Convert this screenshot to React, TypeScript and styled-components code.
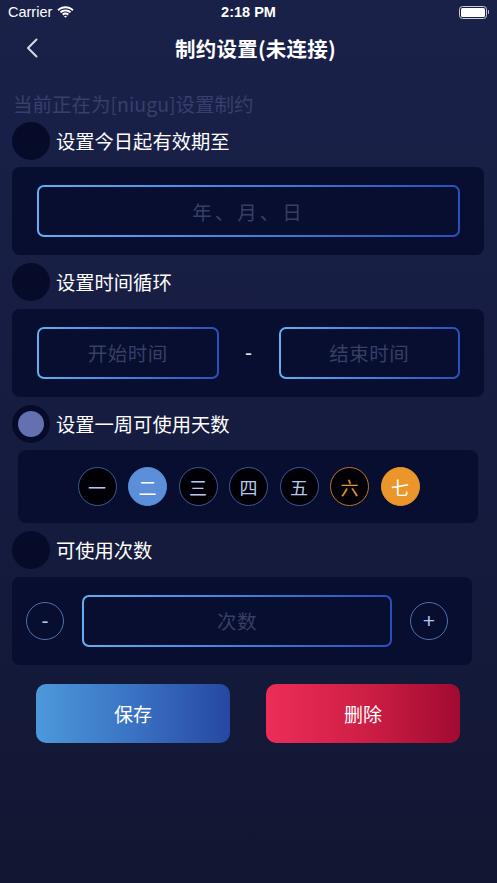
import * as React from 'react';
import styled, { createGlobalStyle, css } from 'styled-components';

const GlobalStyle = createGlobalStyle`
    html, body {
        margin: 0;
        padding: 0;
    }
    body {
        background: #141a3a;
        font-family: 'Noto Sans CJK SC', 'Noto Sans', sans-serif;
    }
`;

const Page = styled.div`
    width: 497px;
    height: 883px;
    overflow: hidden;
    background: linear-gradient(180deg, #1a2149 0%, #161c40 50%, #111732 100%);
    color: #fff;
`;

const StatusBar = styled.div`
    height: 24px;
    display: grid;
    grid-template-columns: 1fr auto 1fr;
    align-items: center;
    padding: 0 8px;
    font-family: 'Liberation Sans', 'Noto Sans', sans-serif;
    font-size: 14.5px;
    color: #fff;
`;

const Carrier = styled.div`
    display: flex;
    align-items: center;
    gap: 5px;
`;

const Clock = styled.div`
    font-weight: 700;
`;

const Battery = styled.div`
    justify-self: end;
    display: flex;
    align-items: center;
`;

const BatteryBody = styled.div`
    width: 24px;
    height: 9px;
    border: 1.5px solid #c9ccd8;
    border-radius: 3.5px;
    padding: 1px;
    & > div {
        width: 100%;
        height: 100%;
        background: #fff;
        border-radius: 1.5px;
    }
`;

const BatteryNub = styled.div`
    width: 1.5px;
    height: 4px;
    margin-left: 1px;
    background: #c9ccd8;
    border-radius: 0 1px 1px 0;
`;

const NavBar = styled.div`
    height: 48px;
    display: grid;
    grid-template-columns: 60px 1fr 60px;
    align-items: center;
`;

const BackButton = styled.div`
    padding-left: 26px;
    display: flex;
    align-items: center;
`;

const Title = styled.div`
    text-align: center;
    padding-left: 14px;
    font-size: 20.5px;
    font-weight: 600;
    letter-spacing: 0.2px;
`;

const Content = styled.div`
    padding: 0 13px 0 12px;
    display: flex;
    flex-direction: column;
`;

const Hint = styled.div`
    margin-top: 19px;
    padding-left: 1px;
    font-size: 19.5px;
    line-height: 25px;
    color: #373f6c;
`;

const OptionRow = styled.div<{ $first?: boolean }>`
    margin-top: ${p => (p.$first ? 5.5 : 8)}px;
    height: 38px;
    display: flex;
    align-items: center;
    gap: 6px;
    font-size: 19.3px;
`;

const Radio = styled.div<{ $checked?: boolean }>`
    width: 38px;
    height: 38px;
    border-radius: 50%;
    background: #060b29;
    display: flex;
    align-items: center;
    justify-content: center;
    & > span {
        width: 26px;
        height: 26px;
        border-radius: 50%;
        background: ${p => (p.$checked ? '#6470b0' : 'transparent')};
    }
`;

const Card = styled.div<{ $height?: number; $left?: number; $right?: number }>`
    margin-top: 7.5px;
    height: ${p => p.$height || 88}px;
    margin-left: ${p => p.$left || 0}px;
    margin-right: ${p => p.$right || 0}px;
    background: #070e2f;
    border-radius: 8px;
    display: flex;
    align-items: center;
`;

const gradientBorder = css`
    border: 2px solid transparent;
    background: linear-gradient(#070e2f, #070e2f) padding-box,
        linear-gradient(90deg, #66aef2 0%, #4280dc 50%, #2c4fbb 100%) border-box;
    border-radius: 7px;
`;

const Field = styled.div<{ $spread?: boolean }>`
    ${gradientBorder};
    flex: 1;
    height: 52px;
    box-sizing: border-box;
    display: flex;
    align-items: center;
    justify-content: center;
    font-size: 19.5px;
    color: #383f66;
    letter-spacing: ${p => (p.$spread ? '3px' : '0.5px')};
`;

const FieldRow = styled.div<{ $pad: string; $gap: number }>`
    flex: 1;
    display: flex;
    align-items: center;
    padding: ${p => p.$pad};
    gap: ${p => p.$gap}px;
`;

const Dash = styled.div`
    width: 16px;
    text-align: center;
    font-family: 'Liberation Sans', sans-serif;
    font-size: 21px;
    color: #e6e8f0;
`;

const DayList = styled.div`
    flex: 1;
    display: flex;
    justify-content: center;
    gap: 11.5px;
    padding-left: 1px;
`;

type DayKind = 'plain' | 'blue' | 'orangeLine' | 'orange';

const dayStyles: Record<DayKind, ReturnType<typeof css>> = {
    plain: css`
        background: #000006;
        border: 1px solid #3b5a93;
        color: #b8c8ea;
    `,
    blue: css`
        background: #5b8fd9;
        border: 1px solid #5b8fd9;
        color: #fff;
    `,
    orangeLine: css`
        background: #000006;
        border: 1px solid #b87530;
        color: #e7982f;
    `,
    orange: css`
        background: #ea962b;
        border: 1px solid #ea962b;
        color: #fff;
    `,
};

const Day = styled.div<{ $kind: DayKind }>`
    width: 39px;
    height: 39px;
    box-sizing: border-box;
    border-radius: 50%;
    display: flex;
    align-items: center;
    justify-content: center;
    font-size: 18px;
    ${p => dayStyles[p.$kind]};
`;

const StepButton = styled.div`
    width: 38px;
    height: 38px;
    box-sizing: border-box;
    border-radius: 50%;
    border: 1px solid #4a72b4;
    display: flex;
    align-items: center;
    justify-content: center;
    color: #b6c6ea;
    font-family: 'Liberation Sans', sans-serif;
    font-size: 21px;
    flex-shrink: 0;
`;

const Actions = styled.div`
    margin-top: 19px;
    padding: 0 24px;
    display: grid;
    grid-template-columns: 194px 194px;
    justify-content: space-between;
`;

const ActionButton = styled.div<{ $tone: 'save' | 'danger' }>`
    height: 59px;
    border-radius: 10px;
    display: flex;
    align-items: center;
    justify-content: center;
    font-size: 19px;
    color: #fff;
    background: ${p =>
        p.$tone === 'save'
            ? 'linear-gradient(90deg, #4c99da 0%, #3a72c4 50%, #2548a1 100%)'
            : 'linear-gradient(90deg, #ec2d57 0%, #cf1f45 50%, #a10a31 100%)'};
`;

const days: { label: string; kind: DayKind }[] = [
    { label: '一', kind: 'plain' },
    { label: '二', kind: 'blue' },
    { label: '三', kind: 'plain' },
    { label: '四', kind: 'plain' },
    { label: '五', kind: 'plain' },
    { label: '六', kind: 'orangeLine' },
    { label: '七', kind: 'orange' },
];

const Wifi = () => (
    <svg width="17" height="12" viewBox="0 0 17 12">
        <path d="M8.5 2.2c2.6 0 5 1 6.8 2.7l1.3-1.4C14.4 1.4 11.6.2 8.5.2S2.6 1.4.4 3.5l1.3 1.4C3.5 3.2 5.9 2.2 8.5 2.2z" fill="#fff" />
        <path d="M8.5 5.4c1.7 0 3.2.6 4.4 1.7l1.3-1.4C12.7 4.3 10.7 3.4 8.5 3.4S4.3 4.3 2.8 5.7l1.3 1.4c1.2-1.1 2.7-1.7 4.4-1.7z" fill="#fff" />
        <path d="M8.5 8.6c.8 0 1.5.3 2 .8l1.4-1.4c-.9-.9-2.1-1.4-3.4-1.4s-2.5.5-3.4 1.4l1.4 1.4c.5-.5 1.2-.8 2-.8z" fill="#fff" />
        <path d="M8.5 11.8l1.5-1.5c-.4-.4-.9-.6-1.5-.6s-1.1.2-1.5.6z" fill="#fff" />
    </svg>
);

const BackIcon = () => (
    <svg width="12" height="20" viewBox="0 0 12 20">
        <path d="M10.5 1.5L2 10l8.5 8.5" fill="none" stroke="#d6d8e2" strokeWidth="2" strokeLinecap="round" strokeLinejoin="round" />
    </svg>
);

const App: React.FC = () => (
    <Page>
        <GlobalStyle />
        <StatusBar>
            <Carrier>
                Carrier
                <Wifi />
            </Carrier>
            <Clock>2:18 PM</Clock>
            <Battery>
                <BatteryBody>
                    <div />
                </BatteryBody>
                <BatteryNub />
            </Battery>
        </StatusBar>
        <NavBar>
            <BackButton>
                <BackIcon />
            </BackButton>
            <Title>制约设置(未连接)</Title>
            <div />
        </NavBar>
        <Content>
            <Hint>当前正在为[niugu]设置制约</Hint>

            <OptionRow $first>
                <Radio>
                    <span />
                </Radio>
                设置今日起有效期至
            </OptionRow>
            <Card>
                <FieldRow $pad="0 24px 0 25px" $gap={0}>
                    <Field $spread>年、月、日</Field>
                </FieldRow>
            </Card>

            <OptionRow>
                <Radio>
                    <span />
                </Radio>
                设置时间循环
            </OptionRow>
            <Card>
                <FieldRow $pad="0 24px 0 25px" $gap={22}>
                    <Field>开始时间</Field>
                    <Dash>-</Dash>
                    <Field>结束时间</Field>
                </FieldRow>
            </Card>

            <OptionRow>
                <Radio $checked>
                    <span />
                </Radio>
                设置一周可使用天数
            </OptionRow>
            <Card $height={73} $left={6} $right={6}>
                <DayList>
                    {days.map(d => (
                        <Day key={d.label} $kind={d.kind}>
                            {d.label}
                        </Day>
                    ))}
                </DayList>
            </Card>

            <OptionRow>
                <Radio>
                    <span />
                </Radio>
                可使用次数
            </OptionRow>
            <Card $right={12}>
                <FieldRow $pad="0 24px 0 14px" $gap={18}>
                    <StepButton>-</StepButton>
                    <Field>次数</Field>
                    <StepButton>+</StepButton>
                </FieldRow>
            </Card>

            <Actions>
                <ActionButton $tone="save">保存</ActionButton>
                <ActionButton $tone="danger">删除</ActionButton>
            </Actions>
        </Content>
    </Page>
);

export default App;
